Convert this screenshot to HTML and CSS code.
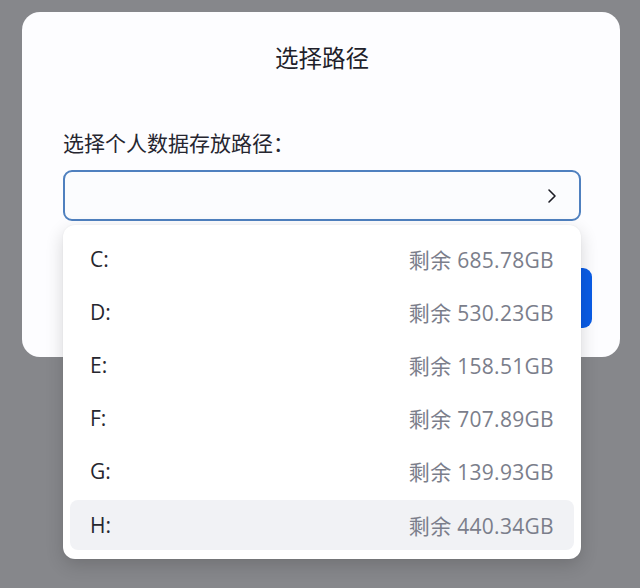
FILE: index.html
```html
<!DOCTYPE html>
<html lang="zh-CN">
<head>
  <meta charset="UTF-8" />
  <meta name="viewport" content="width=device-width, initial-scale=1.0" />
  <title>选择路径</title>
  <link rel="stylesheet" href="styles.css">
</head>
<body>
  <div class="dialog">
    <h1>选择路径</h1>
    <label class="field-label">选择个人数据存放路径：</label>
    <div class="select">
      <div class="select-box">
        <svg class="chevron" width="12" height="16" viewBox="0 0 12 16">
          <path d="M3 2 L9 8 L3 14" fill="none" stroke="#1c1c24" stroke-width="1.6" stroke-linecap="round" stroke-linejoin="round"/>
        </svg>
      </div>
      <ul class="menu">
        <li><span>C:</span><span class="free">剩余 685.78GB</span></li>
        <li><span>D:</span><span class="free">剩余 530.23GB</span></li>
        <li><span>E:</span><span class="free">剩余 158.51GB</span></li>
        <li><span>F:</span><span class="free">剩余 707.89GB</span></li>
        <li><span>G:</span><span class="free">剩余 139.93GB</span></li>
        <li class="hover"><span>H:</span><span class="free">剩余 440.34GB</span></li>
      </ul>
    </div>
    <div class="footer">
      <button class="ok" aria-label="确定"></button>
    </div>
  </div>
</body>
</html>
```

FILE: styles.css
```css
:root {
  --backdrop: #86878b;
  --card: #fdfdff;
  --text: #1f1f2b;
  --muted: #7b7e8b;
  --border: #4f80bf;
  --blue: #0a5ce6;
}
body {
  margin: 0;
  height: 588px;
  background: var(--backdrop);
  font-family: "Open Sans", "Noto Sans CJK SC", sans-serif;
  color: var(--text);
  overflow: hidden;
}
.dialog {
  position: relative;
  margin: 12px 20px 0 22px;
  height: 345px;
  box-sizing: border-box;
  padding: 29px 39px 0 41px;
  background: var(--card);
  border-radius: 18px;
}
h1 {
  margin: 0;
  font-family: "Noto Sans CJK SC", sans-serif;
  font-size: 23.5px;
  font-weight: 400;
  line-height: 32px;
  text-align: center;
}
.field-label {
  display: block;
  margin-top: 54px;
  font-family: "Noto Sans CJK SC", sans-serif;
  font-size: 21px;
  line-height: 30px;
  color: #262630;
}
.select { position: relative; margin-top: 13px; }
.select-box {
  height: 51px;
  box-sizing: border-box;
  border: 2px solid var(--border);
  border-radius: 9px;
  background: #fbfcfe;
  display: flex;
  align-items: center;
  justify-content: flex-end;
  padding-right: 21px;
}
.chevron { display: block; }
.menu {
  position: absolute;
  z-index: 2;
  top: 55px;
  left: 0;
  right: 0;
  margin: 0;
  padding: 7px 7px 9px;
  list-style: none;
  background: #fff;
  border-radius: 12px;
  box-shadow: 0 6px 18px rgba(0,0,0,0.16), 0 0 2px rgba(0,0,0,0.06);
}
.menu li {
  display: flex;
  justify-content: space-between;
  align-items: center;
  height: 53px;
  padding: 0 20px;
  font-size: 21px;
  color: #26262e;
  border-radius: 8px;
}
.menu li.hover { height: 50px; margin-top: 3px; background: #f1f2f5; }
.free { color: var(--muted); letter-spacing: 0.3px; }
.footer {
  display: flex;
  justify-content: flex-end;
  margin: 47px -11px 0 0;
}
.ok {
  width: 130px;
  height: 60px;
  border: none;
  border-radius: 9px;
  background: var(--blue);
}
```
